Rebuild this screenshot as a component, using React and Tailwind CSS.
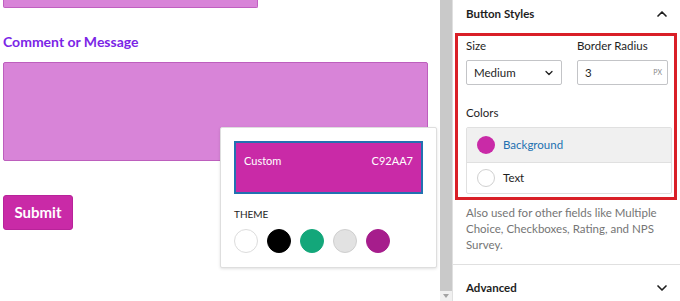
import React from 'react';
import { ChevronUp, ChevronDown } from 'lucide-react';

const swatches = [
  'bg-white border border-[#dcdcdc]',
  'bg-black border border-black',
  'bg-[#13a77a] border border-[#13a77a]',
  'bg-[#e2e2e2] border border-[#cfcfcf]',
  'bg-[#a61d8c] border border-[#a61d8c]',
];

const App = () => {
  return (
    <div className="flex w-[680px] h-[301px] overflow-hidden bg-white font-['Lato',sans-serif]">
      {/* form canvas */}
      <div className="relative w-[440px] shrink-0">
        <div className="ml-[3px] w-[255px] h-[8px] bg-[#d884d8] border-x border-b border-[#c060c0] rounded-b-[2px]" />
        <h2 className="ml-[3px] mt-[24px] text-[14px] leading-[20px] font-bold text-[#7b25e6]">Comment or Message</h2>
        <div className="ml-[3px] mt-[10px] w-[425px] h-[99px] bg-[#d884d8] border border-[#bd5fbd] rounded-[2px]" />
        <button className="ml-[3px] mt-[34px] w-[70px] h-[35px] bg-[#c92aa7] border border-[#b8239a] rounded-[3px] text-white text-[15px] font-bold">
          Submit
        </button>

        <div className="absolute left-[220px] top-[127px] w-[217px] h-[141px] bg-white border border-[#dedede] rounded-[2px] shadow-[0_1px_3px_rgba(0,0,0,0.12)] px-[13px] pt-[13px]">
          <div className="h-[53px] bg-[#c92aa7] border-2 border-[#2271b1] flex items-start justify-between px-[8px] pt-[10px] text-white text-[11px]">
            <span>Custom</span>
            <span>C92AA7</span>
          </div>
          <div className="mt-[14px] text-[10px] leading-[12px] text-[#1e1e1e] uppercase">Theme</div>
          <div className="mt-[9px] flex gap-[9px]">
            {swatches.map((s, i) => (
              <div key={i} className={`w-[24px] h-[24px] rounded-full ${s}`} />
            ))}
          </div>
        </div>
      </div>

      {/* scrollbar */}
      <div className="w-[12px] shrink-0 bg-[#c9c9c9] flex flex-col justify-end items-center">
        <div className="h-[10px] w-full bg-[#f0f0f0] flex items-center justify-center">
          <div className="w-0 h-0 border-x-[3px] border-x-transparent border-t-[4px] border-t-[#a3a3a3]" />
        </div>
      </div>

      {/* sidebar */}
      <div className="w-[228px] shrink-0 border-l border-[#e0e0e0] overflow-hidden text-[#1e1e1e]">
        <div className="h-[28px] flex items-center justify-between pl-[13px] pr-[10px]">
          <span className="text-[11.5px] font-bold">Button Styles</span>
          <ChevronUp size={16} strokeWidth={2.5} />
        </div>
        <div className="ml-[2px] mr-[3px] mt-[5px] border-[3px] border-[#d91f27] pl-[8px] pr-[2px] pt-[1px] pb-[3px]">
          <div className="flex gap-[15px]">
            <div className="w-[96px]">
              <div className="text-[11.5px] leading-[18px]">Size</div>
              <div className="mt-[5px] h-[25px] border border-[#c3c4c7] rounded-[2px] flex items-center justify-between pl-[7px] pr-[6px] text-[11.5px]">
                <span>Medium</span>
                <ChevronDown size={12} strokeWidth={2.5} />
              </div>
            </div>
            <div className="w-[91px]">
              <div className="text-[11.5px] leading-[18px]">Border Radius</div>
              <div className="mt-[5px] h-[25px] border border-[#c3c4c7] rounded-[2px] flex items-center justify-between pl-[7px] pr-[5px] text-[11.5px]">
                <span>3</span>
                <span className="text-[7px] text-[#8a8a8a]">PX</span>
              </div>
            </div>
          </div>
          <div className="mt-[19px] text-[11.5px] leading-[18px]">Colors</div>
          <div className="mt-[5px] border border-[#e0e0e0] rounded-[2px]">
            <div className="h-[35px] bg-[#f0f0f0] border-b border-[#e0e0e0] flex items-center gap-[8px] pl-[10px]">
              <div className="w-[18px] h-[18px] rounded-full bg-[#c92aa7]" />
              <span className="text-[11.5px] text-[#2271b1]">Background</span>
            </div>
            <div className="h-[30px] flex items-center gap-[8px] pl-[10px]">
              <div className="w-[18px] h-[18px] rounded-full bg-white border border-[#d0d0d0]" />
              <span className="text-[11.5px]">Text</span>
            </div>
          </div>
        </div>
        <p className="pl-[13px] pr-[4px] mt-[5px] text-[11.5px] leading-[16px] text-[#757575]">
          Also used for other fields like Multiple Choice, Checkboxes, Rating, and NPS Survey.
        </p>
        <div className="mt-[11px] border-t border-[#e0e0e0] h-[46px] flex items-center justify-between pl-[13px] pr-[10px]">
          <span className="text-[11.5px] font-bold">Advanced</span>
          <ChevronDown size={16} strokeWidth={2.5} />
        </div>
      </div>
    </div>
  );
};

export default App;
